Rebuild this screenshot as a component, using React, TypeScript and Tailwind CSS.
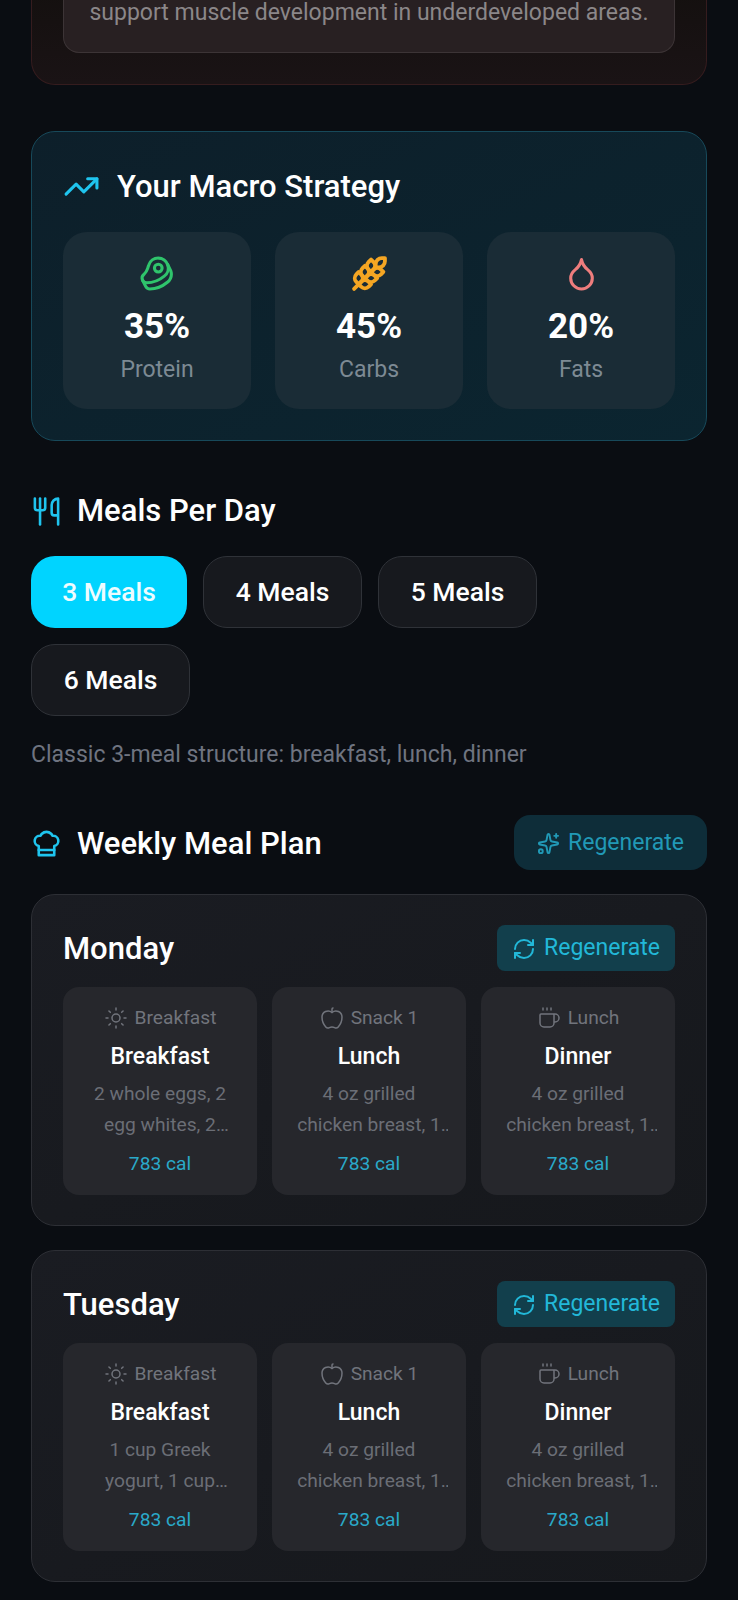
import { Apple, Coffee, Droplet, RefreshCw, Sparkles, Sun, TrendingUp, Utensils } from "lucide-react";
import type { LucideIcon, LucideProps } from "lucide-react";

type Meal = {
  icon: LucideIcon;
  slot: string;
  name: string;
  description: string;
};

type Day = {
  name: string;
  meals: Meal[];
};

const CHICKEN = "4 oz grilled chicken breast, 1 cup brown rice, steamed broccoli";

const DAYS: Day[] = [
  {
    name: "Monday",
    meals: [
      { icon: Sun, slot: "Breakfast", name: "Breakfast", description: "2 whole eggs, 2 egg whites, 2 slices whole wheat toast" },
      { icon: Apple, slot: "Snack 1", name: "Lunch", description: CHICKEN },
      { icon: Coffee, slot: "Lunch", name: "Dinner", description: CHICKEN },
    ],
  },
  {
    name: "Tuesday",
    meals: [
      { icon: Sun, slot: "Breakfast", name: "Breakfast", description: "1 cup Greek yogurt, 1 cup mixed berries and granola" },
      { icon: Apple, slot: "Snack 1", name: "Lunch", description: CHICKEN },
      { icon: Coffee, slot: "Lunch", name: "Dinner", description: CHICKEN },
    ],
  },
];

// Older lucide outlines, the current package redraws these three.
function BeefIcon({ className }: LucideProps) {
  return (
    <svg viewBox="0 0 24 24" fill="none" stroke="currentColor" strokeWidth={2} strokeLinecap="round" strokeLinejoin="round" className={className}>
      <circle cx="12.5" cy="8.5" r="2.5" />
      <path d="M12.5 2a6.5 6.5 0 0 0-6.22 4.6c-1.1 3.13-.78 3.9-3.18 6.08A3 3 0 0 0 5 18c4 0 8.4-1.8 11.4-4.3A6.5 6.5 0 0 0 12.5 2Z" />
      <path d="m18.5 6 2.19 4.5a6.48 6.48 0 0 1 .31 2 6.49 6.49 0 0 1-2.6 5.2C15.4 20.2 11 22 7 22a3 3 0 0 1-2.68-1.66L2.4 16.5" />
    </svg>
  );
}

function WheatIcon({ className }: LucideProps) {
  return (
    <svg viewBox="0 0 24 24" fill="none" stroke="currentColor" strokeWidth={2.5} strokeLinecap="round" strokeLinejoin="round" className={className}>
      <path d="M2 22 16 8" />
      <path d="M3.47 12.53 5 11l1.53 1.53a3.5 3.5 0 0 1 0 4.94L5 19l-1.53-1.53a3.5 3.5 0 0 1 0-4.94Z" />
      <path d="M7.47 8.53 9 7l1.53 1.53a3.5 3.5 0 0 1 0 4.94L9 15l-1.53-1.53a3.5 3.5 0 0 1 0-4.94Z" />
      <path d="M11.47 4.53 13 3l1.53 1.53a3.5 3.5 0 0 1 0 4.94L13 11l-1.53-1.53a3.5 3.5 0 0 1 0-4.94Z" />
      <path d="M20 2h2v2a4 4 0 0 1-4 4h-2V6a4 4 0 0 1 4-4Z" />
      <path d="M11.47 17.47 13 19l-1.53 1.53a3.5 3.5 0 0 1-4.94 0L5 19l1.53-1.53a3.5 3.5 0 0 1 4.94 0Z" />
      <path d="M15.47 13.47 17 15l-1.53 1.53a3.5 3.5 0 0 1-4.94 0L9 15l1.53-1.53a3.5 3.5 0 0 1 4.94 0Z" />
      <path d="M19.47 9.47 21 11l-1.53 1.53a3.5 3.5 0 0 1-4.94 0L13 11l1.53-1.53a3.5 3.5 0 0 1 4.94 0Z" />
    </svg>
  );
}

function ChefHatIcon({ className }: LucideProps) {
  return (
    <svg viewBox="0 0 24 24" fill="none" stroke="currentColor" strokeWidth={2} strokeLinecap="round" strokeLinejoin="round" className={className}>
      <path d="M6 13.87A4 4 0 0 1 7.41 6a5.11 5.11 0 0 1 1.05-1.54 5 5 0 0 1 7.08 0A5.11 5.11 0 0 1 16.59 6 4 4 0 0 1 18 13.87V21H6Z" />
      <line x1="6" x2="18" y1="17" y2="17" />
    </svg>
  );
}

const MACROS = [
  { icon: BeefIcon, value: "35%", label: "Protein", color: "text-[#2fc46c]" },
  { icon: WheatIcon, value: "45%", label: "Carbs", color: "text-[#f5a623]" },
  { icon: Droplet, value: "20%", label: "Fats", color: "text-[#ee7d7d]" },
];

function MacroCard({ icon: Icon, value, label, color }: (typeof MACROS)[number]) {
  return (
    <div className="flex h-[177px] flex-col items-center rounded-[24px] bg-[#1a2c36] pt-[23px]">
      <Icon className={`size-[37px] ${color}`} />
      <div className="mt-[15px] text-[35px] leading-[40px] font-bold text-white">{value}</div>
      <div className="mt-[8px] text-[23px] leading-[30px] text-[#7d8a94]">{label}</div>
    </div>
  );
}

function MealOption({ label, active }: { label: string; active?: boolean }) {
  return (
    <button
      className={
        active
          ? "h-[72px] w-[156px] rounded-[24px] bg-[#00d4ff] text-[26.5px] font-medium text-[#eefcff]"
          : "h-[72px] w-[159px] rounded-[24px] border border-[#2f3238] bg-[#17191e] text-[26.5px] font-medium text-white"
      }
    >
      {label}
    </button>
  );
}

function MealCard({ icon: Icon, slot, name, description }: Meal) {
  return (
    <div className="flex h-[208px] flex-col items-center rounded-[16px] bg-[#26272c] px-[18px] pt-[18px] text-center">
      <div className="flex h-[26px] items-center gap-[7px] text-[#71747c]">
        <Icon className="size-[24px]" strokeWidth={1.5} />
        <span className="text-[19.2px]">{slot}</span>
      </div>
      <div className="mt-[11px] text-[23px] leading-[30px] font-medium text-white">{name}</div>
      <p className="mt-[6px] line-clamp-2 w-full text-[19.2px] leading-[31px] text-[#6b6e76]">{description}</p>
      <div className="mt-[10px] text-[19.2px] leading-[28px] text-[#2aa9c9]">783 cal</div>
    </div>
  );
}

function DayCard({ day }: { day: Day }) {
  return (
    <section className="rounded-[24px] border border-[#2d2f35] bg-gradient-to-br from-[#1a1c22] to-[#16181c] px-[31px] pt-[30px] pb-[30px]">
      <div className="flex h-[46px] items-center justify-between">
        <h3 className="pt-[2px] text-[31px] font-medium text-white">{day.name}</h3>
        <button className="flex h-[46px] w-[178px] items-center justify-center gap-[8px] rounded-[8px] bg-[#123f4c] pt-[1px] text-[23px] text-[#22b8d8]">
          <RefreshCw className="size-[24px]" strokeWidth={2} />
          Regenerate
        </button>
      </div>
      <div className="mt-[16px] grid grid-cols-3 gap-[15px]">
        {day.meals.map((meal) => (
          <MealCard key={`${day.name}-${meal.name}`} {...meal} />
        ))}
      </div>
    </section>
  );
}

export default function App() {
  return (
    <div className="h-[1600px] overflow-hidden bg-[#0a0d12] px-[31px] font-['Roboto',sans-serif]">
      <section className="-mt-[10px] rounded-b-[24px] border border-t-0 border-[#351c1e] bg-gradient-to-b from-[#14100f] to-[#1a1315] px-[31px] pb-[31px]">
        <div className="h-[63px] rounded-b-[16px] border border-t-0 border-[#3c3436] bg-[#282022] pt-[8px] text-center text-[23px] leading-[30px] text-[#8b8789]">
          support muscle development in underdeveloped areas.
        </div>
      </section>

      <section className="mt-[46px] h-[310px] rounded-[24px] border border-[#17495a] bg-gradient-to-br from-[#0d1f2a] to-[#0b2530] px-[31px] pt-[32px]">
        <div className="flex h-[44px] items-center gap-[17px]">
          <TrendingUp className="size-[37px] text-[#1fc4ee]" strokeWidth={2} />
          <h2 className="pt-[2px] text-[31px] font-medium text-white">Your Macro Strategy</h2>
        </div>
        <div className="mt-[24px] grid grid-cols-3 gap-[24px]">
          {MACROS.map((macro) => (
            <MacroCard key={macro.label} {...macro} />
          ))}
        </div>
      </section>

      <section className="mt-[48px]">
        <div className="flex h-[44px] items-center gap-[15px]">
          <Utensils className="size-[31px] text-[#1fc4ee]" strokeWidth={2} />
          <h2 className="text-[31px] font-medium text-white">Meals Per Day</h2>
        </div>
        <div className="mt-[23px] flex flex-wrap gap-[16px]">
          <MealOption label="3 Meals" active />
          <MealOption label="4 Meals" />
          <MealOption label="5 Meals" />
          <MealOption label="6 Meals" />
        </div>
        <p className="mt-[23px] text-[23px] leading-[32px] text-[#6f7480]">
          Classic 3-meal structure: breakfast, lunch, dinner
        </p>
      </section>

      <section className="mt-[44px]">
        <div className="flex h-[55px] items-center justify-between">
          <div className="flex items-center gap-[15px]">
            <ChefHatIcon className="mt-[2px] size-[31px] text-[#1fc4ee]" />
            <h2 className="pt-[4px] text-[31px] font-medium text-white">Weekly Meal Plan</h2>
          </div>
          <button className="flex h-[55px] w-[193px] items-center justify-center gap-[8px] rounded-[16px] bg-[#0e2d39] pt-[1px] text-[23px] text-[#2199b6]">
            <Sparkles className="size-[23px]" strokeWidth={2} />
            Regenerate
          </button>
        </div>
        <div className="mt-[24px] flex flex-col gap-[24px]">
          {DAYS.map((day) => (
            <DayCard key={day.name} day={day} />
          ))}
        </div>
      </section>
    </div>
  );
}
